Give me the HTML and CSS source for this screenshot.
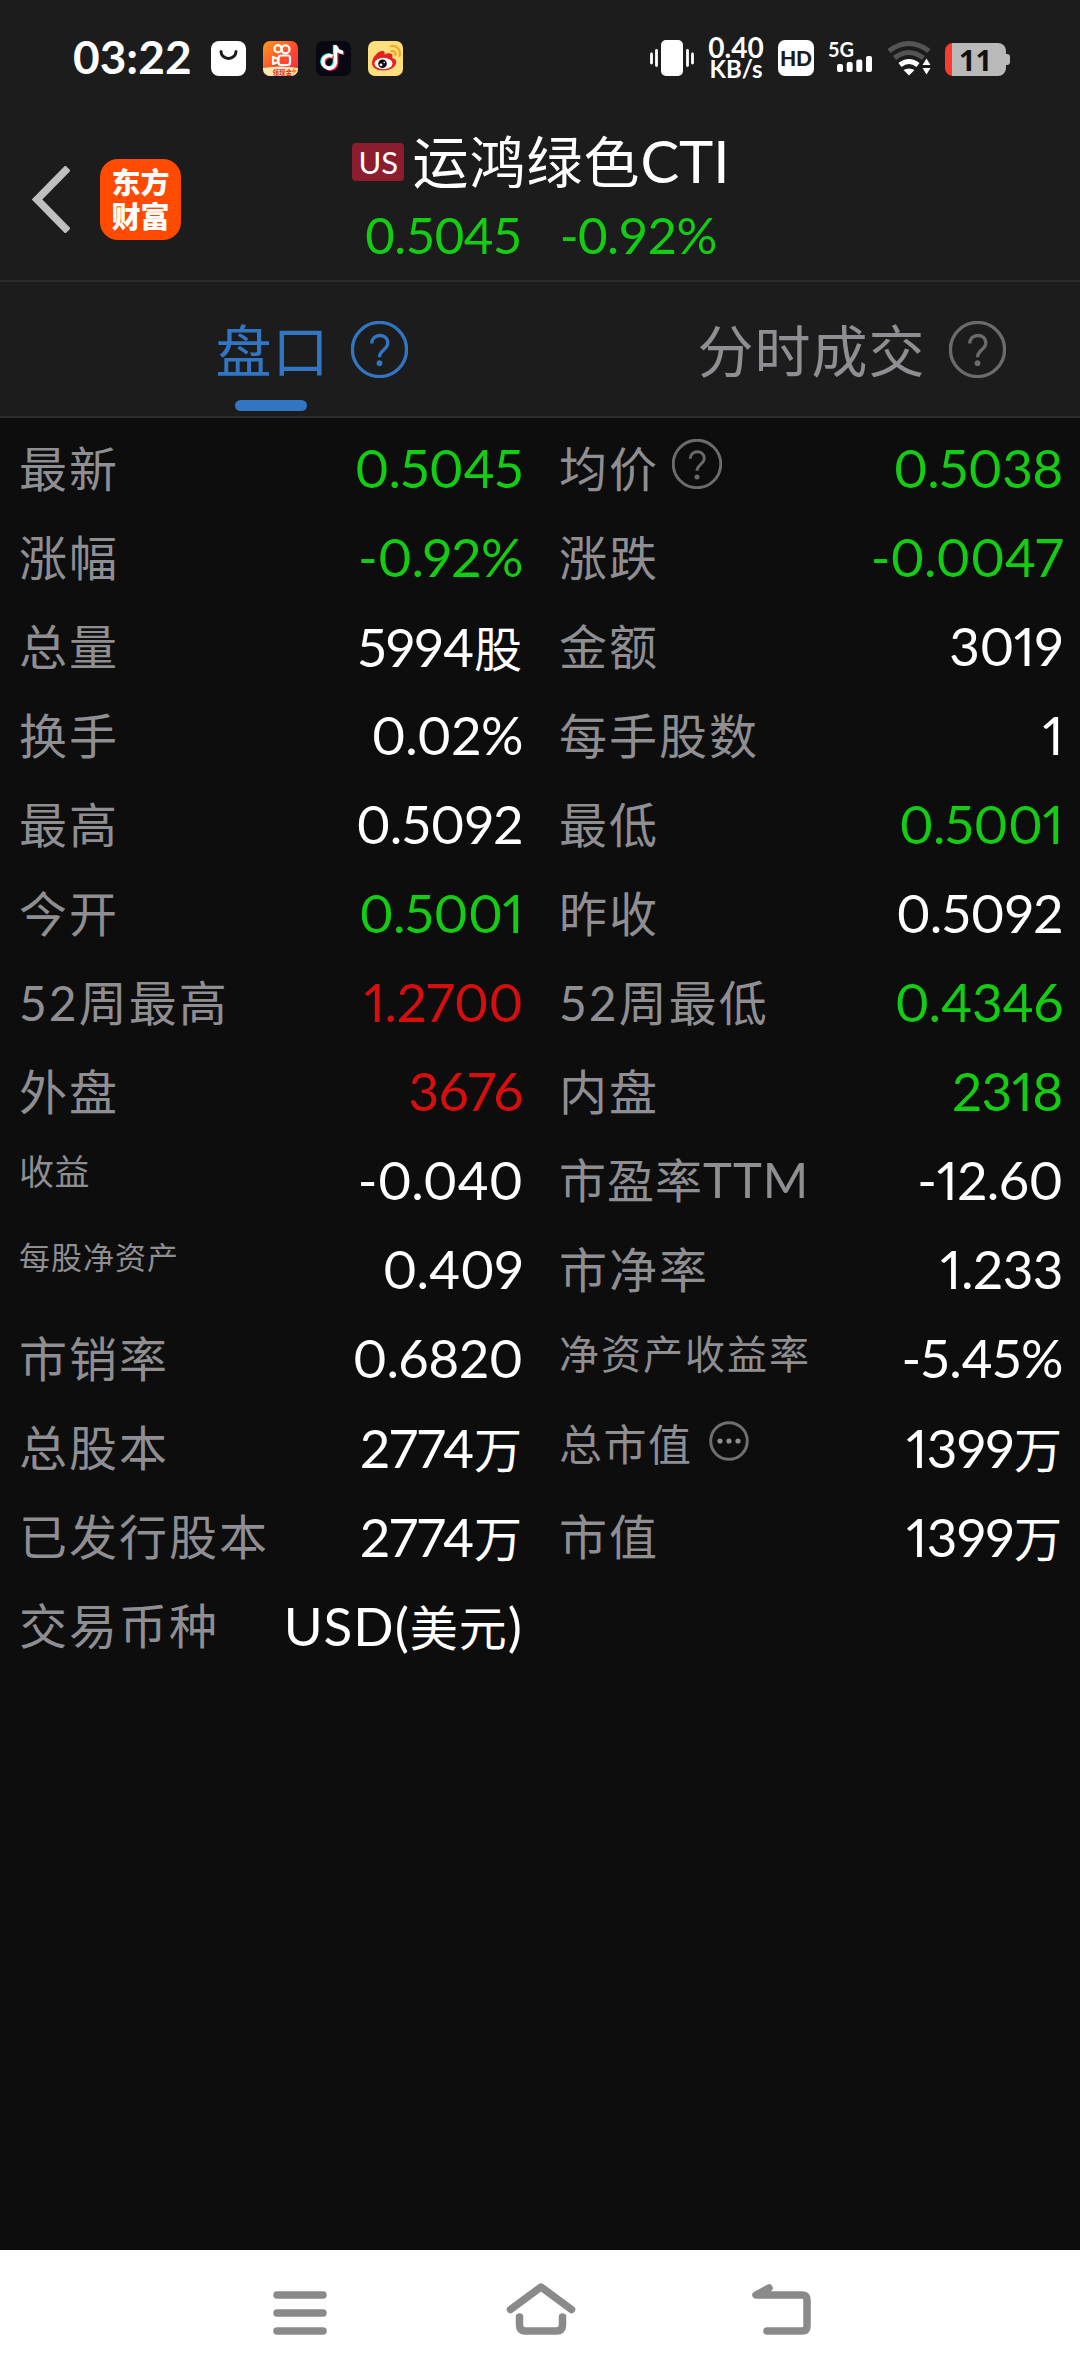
FILE: index.html
```html
<!DOCTYPE html>
<html lang="zh-CN">
<head>
  <meta charset="UTF-8">
  <meta name="viewport" content="width=device-width, initial-scale=1.0">
  <title>运鸿绿色CTI</title>
  <link rel="stylesheet" href="styles.css">
</head>
<body>

  <!-- Status bar -->
  <div class="status-bar">
    <div class="status-left">
      <span class="clock">03:22</span>
      <svg class="app-icon" viewBox="0 0 35 35">
        <rect width="35" height="35" rx="8" fill="#fff"/>
        <path d="M10 10.500a7.500 7 0 0 0 15 0" fill="none" stroke="#1c1c1c" stroke-width="3" stroke-linecap="round"/>
      </svg>
      <svg class="app-icon" viewBox="0 0 35 35">
        <defs>
          <linearGradient id="ks" x1="0" y1="0" x2="1" y2="1">
            <stop offset="0" stop-color="#ff9a1f"/>
            <stop offset="0.550" stop-color="#ff4a2c"/>
            <stop offset="1" stop-color="#ff2750"/>
          </linearGradient>
          <clipPath id="ks-clip"><rect width="35" height="35" rx="7"/></clipPath>
        </defs>
        <g clip-path="url(#ks-clip)">
          <rect width="35" height="35" fill="url(#ks)"/>
          <g fill="none" stroke="#fff" stroke-width="2.200">
            <circle cx="15" cy="7.800" r="3.600"/>
            <circle cx="22.500" cy="8.300" r="4"/>
            <rect x="15.500" y="14.500" width="11.500" height="9.500" rx="2.500"/>
            <path d="M15 18l-5-2v7l5-2z" stroke-linejoin="round"/>
          </g>
          <path d="M0 27q17-3 35 0v8H0z" fill="#ffe9b5"/>
          <text x="9.500" y="33.500" class="icon-caption">领现金</text>
          <path d="M32 26l-4 5h3l-2 4 5-6h-3z" fill="#ff8a1c"/>
        </g>
      </svg>
      <svg class="app-icon" viewBox="0 0 35 35">
        <rect width="35" height="35" rx="7" fill="#070812"/>
        <g fill="none" stroke-width="3.400">
          <path d="M16.500 15.500a6.300 6.300 0 1 0 3 6V4.500c.5 4 3.500 6.500 7.500 6.700" stroke="#25f4ee" transform="translate(-1 -.5)"/>
          <path d="M16.500 15.500a6.300 6.300 0 1 0 3 6V4.500c.5 4 3.500 6.500 7.500 6.700" stroke="#fe2c55" transform="translate(1.200 1)"/>
          <path d="M16.500 15.500a6.300 6.300 0 1 0 3 6V4.500c.5 4 3.500 6.500 7.500 6.700" stroke="#fff"/>
        </g>
      </svg>
      <svg class="app-icon" viewBox="0 0 35 35">
        <rect width="35" height="35" rx="7" fill="#ffdf7e"/>
        <path d="M4 22c0-6 7-13 11-12 2 .5 2 2 1.500 3.500 4-2 8-2 8 1.500 0 1 0 1.500-.5 2 3 .8 5 2.500 4 5.500-1 4-6 7-13 7S4 26 4 22z" fill="#e6201f"/>
        <ellipse cx="15.500" cy="22.500" rx="9" ry="5.800" fill="#fff"/>
        <circle cx="14.500" cy="22.800" r="4.300" fill="#0a0a0a"/>
        <circle cx="13" cy="23.800" r="1.400" fill="#fff"/>
        <circle cx="16.200" cy="21.500" r=".8" fill="#fff"/>
        <path d="M23 5c6-1 10 4 8.500 10M23.500 10c3-.5 4.500 2 3.800 4.500" fill="none" stroke="#f6a623" stroke-width="2.200" stroke-linecap="round"/>
      </svg>
    </div>
    <div class="status-right">
      <svg class="vibrate" width="44" height="36" viewBox="0 0 44 36">
        <rect x="11" width="22" height="36" rx="5" fill="#fff"/>
        <path d="M1.500 14v9M6.500 10.500v15M37.500 10.500v15M42.500 14v9" stroke="#fff" stroke-width="2.800" stroke-linecap="round"/>
      </svg>
      <div class="net-speed">
        <span class="speed-num">0.40</span>
        <span class="speed-unit">KB/s</span>
      </div>
      <div class="hd">HD</div>
      <svg class="signal" width="46" height="36" viewBox="0 0 46 36">
        <text x="0" y="17" class="signal-text">5G</text>
        <g fill="#fff">
          <rect x="9" y="24" width="6" height="8" rx="2"/>
          <rect x="18.700" y="22" width="6" height="10" rx="2"/>
          <rect x="28.300" y="19.500" width="6" height="12.500" rx="2"/>
          <rect x="38" y="16" width="6" height="16" rx="2"/>
        </g>
      </svg>
      <svg class="wifi" width="44" height="36" viewBox="0 0 44 36">
        <g fill="none" stroke-width="5">
          <path d="M2 11q19.500-15 40 0" stroke="#545454"/>
          <path d="M7.500 18q14-11 29 0" stroke="#545454"/>
          <path d="M13 25q9-7 18 0" stroke="#fff"/>
        </g>
        <path d="M16.500 30q5.500-3 11 0l-5.500 5.500z" fill="#fff"/>
        <path d="M39.500 18.500l4 6.500h-8zM39.500 34.500l4-6.500h-8z" fill="#fff"/>
      </svg>
      <div class="battery"><span>11</span></div>
    </div>
  </div>

  <!-- Title bar -->
  <div class="header">
    <svg class="back" width="38" height="67" viewBox="0 0 38 67">
      <path d="M36 2L5 33.500 36 65" fill="none" stroke="#bfbfbf" stroke-width="7.500"/>
    </svg>
    <div class="logo"><span>东方</span><span>财富</span></div>
    <div class="stock">
      <div class="stock-name">
        <span class="market">US</span>
        <span class="name">运鸿绿色<span class="latin">CTI</span></span>
      </div>
      <div class="stock-price green">
        <span>0.5045</span>
        <span>-0.92%</span>
      </div>
    </div>
  </div>

  <!-- Tabs -->
  <div class="tabs">
    <div class="tab active">
      <span class="tab-label">盘口</span>
      <svg class="help" viewBox="0 0 48 48">
        <circle cx="24" cy="24" r="22.800"/>
        <path d="M17.500 19c0-9 13.500-9 13.500-.5 0 5.500-7 6-7 12"/>
        <circle class="dot" cx="24" cy="35.500" r="2.400"/>
      </svg>
    </div>
    <div class="tab">
      <span class="tab-label">分时成交</span>
      <svg class="help" viewBox="0 0 48 48">
        <circle cx="24" cy="24" r="22.800"/>
        <path d="M17.500 19c0-9 13.500-9 13.500-.5 0 5.500-7 6-7 12"/>
        <circle class="dot" cx="24" cy="35.500" r="2.400"/>
      </svg>
    </div>
  </div>

  <!-- Quote table -->
  <div class="quotes">
    <div class="cell"><span class="label">最新</span><span class="value green">0.5045</span></div>
    <div class="cell">
      <span class="label">均价</span>
      <svg class="help small" viewBox="0 0 48 48">
        <circle cx="24" cy="24" r="22.800"/>
        <path d="M17.500 19c0-9 13.500-9 13.500-.5 0 5.500-7 6-7 12"/>
        <circle class="dot" cx="24" cy="36.500" r="2.400"/>
      </svg>
      <span class="value green">0.5038</span>
    </div>

    <div class="cell"><span class="label">涨幅</span><span class="value green">-0.92%</span></div>
    <div class="cell"><span class="label">涨跌</span><span class="value green">-0.0047</span></div>

    <div class="cell"><span class="label">总量</span><span class="value">5994<span class="cn">股</span></span></div>
    <div class="cell"><span class="label">金额</span><span class="value">3019</span></div>

    <div class="cell"><span class="label">换手</span><span class="value">0.02%</span></div>
    <div class="cell"><span class="label">每手股数</span><span class="value">1</span></div>

    <div class="cell"><span class="label">最高</span><span class="value">0.5092</span></div>
    <div class="cell"><span class="label">最低</span><span class="value green">0.5001</span></div>

    <div class="cell"><span class="label">今开</span><span class="value green">0.5001</span></div>
    <div class="cell"><span class="label">昨收</span><span class="value">0.5092</span></div>

    <div class="cell"><span class="label">52周最高</span><span class="value red">1.2700</span></div>
    <div class="cell"><span class="label">52周最低</span><span class="value green">0.4346</span></div>

    <div class="cell"><span class="label">外盘</span><span class="value red">3676</span></div>
    <div class="cell"><span class="label">内盘</span><span class="value green">2318</span></div>

    <div class="cell"><span class="label fit-35">收益</span><span class="value">-0.040</span></div>
    <div class="cell"><span class="label fit-47">市盈率<span class="latin">TTM</span></span><span class="value">-12.60</span></div>

    <div class="cell"><span class="label fit-31">每股净资产</span><span class="value">0.409</span></div>
    <div class="cell"><span class="label">市净率</span><span class="value">1.233</span></div>

    <div class="cell"><span class="label">市销率</span><span class="value">0.6820</span></div>
    <div class="cell"><span class="label fit-40">净资产收益率</span><span class="value">-5.45%</span></div>

    <div class="cell"><span class="label">总股本</span><span class="value">2774<span class="cn">万</span></span></div>
    <div class="cell">
      <span class="label fit-43">总市值</span>
      <svg class="more" viewBox="0 0 40 40">
        <circle cx="20" cy="20" r="18.300" fill="none" stroke="#6f6f72" stroke-width="3"/>
        <g fill="#8e8e93">
          <circle cx="11" cy="20" r="2.600"/>
          <circle cx="20" cy="20" r="2.600"/>
          <circle cx="29" cy="20" r="2.600"/>
        </g>
      </svg>
      <span class="value">1399<span class="cn">万</span></span>
    </div>

    <div class="cell"><span class="label">已发行股本</span><span class="value">2774<span class="cn">万</span></span></div>
    <div class="cell"><span class="label">市值</span><span class="value">1399<span class="cn">万</span></span></div>

    <div class="cell"><span class="label">交易币种</span><span class="value currency">USD(<span class="cn">美元</span>)</span></div>
  </div>

  <!-- System navigation -->
  <div class="nav-bar">
    <svg width="60" height="60" viewBox="0 0 60 60">
      <path d="M7 12h46M7 30h46M7 48h46"/>
    </svg>
    <svg width="76" height="60" viewBox="0 0 76 60">
      <path d="M7.500 26.500L38 4l30.500 22.500"/>
      <path d="M16.500 34v8q0 6 6 6h31q6 0 6-6v-8"/>
    </svg>
    <svg width="60" height="60" viewBox="0 0 60 60">
      <path d="M18 5L5 12h46q5 0 5 5v26q0 5-5 5H16"/>
    </svg>
  </div>

</body>
</html>
```

FILE: styles.css
```css
/* General Styles */
* {
  box-sizing: border-box;
}

body {
  margin: 0;
  height: 2376px;
  display: flex;
  flex-direction: column;
  background-color: #0d0d0d;
  color: #fff;
  font-family: Lato, "Noto Sans CJK SC", sans-serif;
  white-space: nowrap;
}

.green {
  color: #14cc14;
}

.red {
  color: #d60f0e;
}

/* Status Bar */
.status-bar {
  height: 116px;
  padding: 0 70px 0 73px;
  display: flex;
  justify-content: space-between;
  align-items: center;
  background-color: #1c1c1c;
}

.status-left {
  display: flex;
  align-items: center;
  gap: 17.5px;
}

.clock {
  width: 120px;
  font-size: 46px;
  font-weight: bold;
  line-height: 56px;
  margin-bottom: 2px;
}

.app-icon {
  width: 35px;
  height: 35px;
}

.icon-caption {
  font-size: 6.5px;
  font-weight: bold;
  fill: #d8341c;
}

.status-right {
  display: flex;
  align-items: center;
}

.net-speed {
  width: 62px;
  margin-left: 11px;
  display: flex;
  flex-direction: column;
  align-items: center;
  font-weight: bold;
}

.speed-num {
  font-size: 28px;
  line-height: 22px;
}

.speed-unit {
  font-size: 24px;
  line-height: 22px;
}

.hd {
  width: 36px;
  height: 36px;
  margin: 0 14px 0 11px;
  border-radius: 7px;
  background-color: #fff;
  color: #1c1c1c;
  font-size: 21px;
  font-weight: 900;
  line-height: 36px;
  text-align: center;
}

.signal {
  overflow: visible;
}

.signal-text {
  font-size: 20px;
  font-weight: bold;
  fill: #fff;
}

.wifi {
  margin: 0 14px 0 13px;
}

.battery {
  width: 61px;
  height: 33px;
  margin: 2px 4px 0 0;
  position: relative;
  border-radius: 8px;
  background: linear-gradient(to right, #f93b30 7px, #b9b9b9 7px);
  color: #111;
  font-family: "Noto Sans", sans-serif;
  font-size: 29px;
  font-weight: bold;
  line-height: 33px;
  text-align: center;
}

.battery::after {
  content: "";
  position: absolute;
  right: -4px;
  top: 11px;
  width: 5px;
  height: 11px;
  border-radius: 0 3px 3px 0;
  background-color: #b9b9b9;
}

/* Header */
.header {
  height: 166px;
  padding: 0 32px;
  position: relative;
  display: flex;
  align-items: center;
  background-color: #1c1c1c;
  border-bottom: 2px solid #2c2c2c;
}

.back {
  margin-top: 3px;
}

.logo {
  width: 81px;
  height: 81px;
  margin: 3px 0 0 30px;
  display: flex;
  flex-direction: column;
  align-items: center;
  justify-content: center;
  border-radius: 18px;
  background-color: #ff4a00;
  font-size: 29px;
  font-weight: 900;
  line-height: 34px;
}

/* title is centred on the screen, over the back button row */
.stock {
  position: absolute;
  left: 0;
  right: 0;
  top: 8px;
  display: flex;
  flex-direction: column;
  align-items: center;
}

.stock-name {
  padding-left: 2px;
  display: flex;
  align-items: center;
  gap: 8px;
}

.market {
  width: 52px;
  height: 38px;
  border-radius: 4px;
  background-color: #8c1d2f;
  font-size: 31px;
  line-height: 38px;
  text-align: center;
}

.name {
  font-size: 56px;
  letter-spacing: 1px;
  line-height: 74px;
}

.name .latin {
  font-size: 58px;
  letter-spacing: 0;
}

.stock-price {
  padding-left: 2px;
  display: flex;
  gap: 38px;
  font-size: 51px;
  letter-spacing: -0.6px;
  line-height: 72px;
}

/* Tabs */
.tabs {
  height: 136px;
  display: flex;
  background-color: #1c1c1c;
  border-bottom: 2px solid #2c2c2c;
}

.tab {
  width: 50%;
  padding-left: 83px;
  display: flex;
  justify-content: center;
  align-items: center;
  gap: 23px;
  color: #8e8e93;
}

.tab.active {
  gap: 21px;
  color: #3276c3;
}

.tab-label {
  height: 100%;
  position: relative;
  font-size: 56px;
  letter-spacing: 1px;
  line-height: 138px;
}

.tab.active .tab-label::after {
  content: "";
  position: absolute;
  left: 19px;
  bottom: 5px;
  width: 72px;
  height: 11px;
  border-radius: 6px;
  background-color: #3276c3;
}

.help {
  width: 57px;
  height: 57px;
  fill: none;
  stroke: #6b6b6b;
  stroke-width: 2.8;
}

.help .dot {
  fill: #6b6b6b;
  stroke: none;
}

.active .help {
  stroke: #3276c3;
}

.active .help .dot {
  fill: #3276c3;
}

/* Quotes */
.quotes {
  flex: 1;
  padding-top: 6px;
  display: grid;
  grid-template-columns: 1fr 1fr;
  grid-auto-rows: 89px;
}

.cell {
  padding: 0 17px 0 19px;
  display: flex;
  align-items: center;
}

.label {
  margin-bottom: 6px;
  color: #8e8e93;
  font-size: 48px;
  letter-spacing: 2px;
}

.value {
  margin: 0 0 2px auto;
  font-size: 53px;
  font-variant-numeric: proportional-nums;
  letter-spacing: -0.4px;
}

.value .cn {
  font-size: 48px;
  letter-spacing: 1px;
}

.value.currency {
  letter-spacing: 1px;
}

.help.small {
  width: 50px;
  height: 50px;
  margin: 0 0 10px 13px;
}

.more {
  width: 40px;
  height: 40px;
  margin: 0 0 14px 16px;
}

.fit-47 {
  font-size: 47px;
  letter-spacing: 1px;
}

.fit-47 .latin {
  font-size: 49px;
}

.fit-43 {
  margin-bottom: 11px;
  font-size: 43px;
  letter-spacing: 1.5px;
}

.fit-40 {
  margin-bottom: 14px;
  font-size: 40px;
}

.fit-35 {
  margin-bottom: 23px;
  font-size: 35px;
  letter-spacing: 0.5px;
}

.fit-31 {
  margin-bottom: 28px;
  font-size: 31px;
  letter-spacing: 1px;
}

/* Navigation Bar */
.nav-bar {
  height: 126px;
  padding: 0 269px 0 270px;
  display: flex;
  justify-content: space-between;
  align-items: center;
  background-color: #fff;
}

.nav-bar svg {
  fill: none;
  stroke: #8a8a8a;
  stroke-width: 7.5;
  stroke-linecap: round;
  stroke-linejoin: round;
}
```
